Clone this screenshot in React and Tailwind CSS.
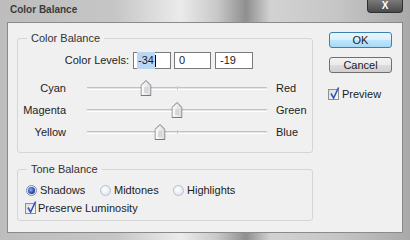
import React from 'react';

const sliders = [
  { left: 'Cyan', right: 'Red', value: -34 },
  { left: 'Magenta', right: 'Green', value: 0 },
  { left: 'Yellow', right: 'Blue', value: -19 },
];

const Check = () => (
  <span className="relative w-[11px] h-[11px] border border-[#8e8f8f] bg-[linear-gradient(135deg,#dcdcdc,#fbfbfb)] shrink-0">
    <svg className="absolute left-[0px] top-[-3px] overflow-visible" width="11" height="13" viewBox="0 0 11 13">
      <path d="M2 6.5 L4.6 11 L9.6 0.5" fill="none" stroke="#3355c0" strokeWidth="1.6" />
    </svg>
  </span>
);

const Radio = ({ checked }) => (
  <span className={`w-[11px] h-[11px] rounded-full border shrink-0 flex items-center justify-center ${checked ? 'border-[#7d8fa8] bg-[#dfe8f2]' : 'border-[#b3c0cf] bg-[radial-gradient(circle_at_40%_40%,#ffffff,#d5e0ec)]'}`}>
    {checked && <span className="w-[7px] h-[7px] rounded-full bg-[radial-gradient(circle_at_40%_40%,#8fb0ff,#2a3fa8_60%,#1b2a7a)]" />}
  </span>
);

const Thumb = () => (
  <svg width="11" height="16" viewBox="0 0 11 16">
    <defs>
      <linearGradient id="tg" x1="0" x2="1" y1="0" y2="0">
        <stop offset="0" stopColor="#ffffff" />
        <stop offset="1" stopColor="#d8d8d8" />
      </linearGradient>
    </defs>
    <path d="M0.5 5.5 L5.5 0.5 L10.5 5.5 V15.5 H0.5 Z" fill="url(#tg)" stroke="#6f7a86" />
    <path d="M4.5 7 V13 M6.5 7 V13" stroke="#c4c4c4" />
  </svg>
);

export default function App() {
  return (
    <div className="w-[410px] h-[240px] flex flex-col overflow-hidden font-['Liberation_Sans',Arial,sans-serif] text-[11px] text-[#1c1c1c] bg-[linear-gradient(90deg,#bdbdbd_0%,#c6c6c6_28%,#ebebeb_44%,#c8c8c8_53%,#8f8f8f_60%,#d2d2d2_66%,#c6c6c6_82%,#a9a9a9_100%)]">
      <div className="h-[22px] flex shrink-0">
        <div className="pl-[10px] pt-[5px] text-[10px] font-bold text-[#3b3b3b] leading-none">Color Balance</div>
        <div className="ml-auto mr-[7px] w-[36px] h-[13px] rounded-b-[4px] border border-t-0 border-[#2e2e2e] bg-[linear-gradient(180deg,#7a7a7a,#4a4a4a)] flex items-center justify-center">
          <span className="text-white font-bold text-[10px] leading-none">X</span>
        </div>
      </div>

      <div className="flex-1 mx-[7px] mb-[7px] border border-[#8a8a8a] bg-[#f0f0f0] flex">
        <div className="pl-[9px] pt-[9px] flex flex-col">
          <fieldset className="w-[296px] h-[121px] border border-[#d5d5d5] rounded-[3px]">
            <legend className="ml-[9px] px-[4px] leading-[13px] text-[#333]">Color Balance</legend>
            <div className="flex items-center mt-[7px] h-[17px]">
              <span className="w-[111px] text-right">Color Levels:</span>
              <div className="ml-[4px] w-[38px] h-[17px] border border-[#7a7a7a] bg-white flex items-center pl-[3px]">
                <span className="bg-[#b9d7f3] px-[1px]">-34</span>
                <span className="w-px h-[12px] bg-black" />
              </div>
              <div className="ml-[3px] w-[37px] h-[17px] border border-[#7a7a7a] bg-white flex items-center pl-[4px]">0</div>
              <div className="ml-[4px] w-[38px] h-[17px] border border-[#7a7a7a] bg-white flex items-center pl-[4px]">-19</div>
            </div>
            <div className="mt-[8px] flex flex-col">
              {sliders.map((s) => (
                <div key={s.left} className="h-[22px] flex items-center">
                  <span className="w-[48px] text-right">{s.left}</span>
                  <div className="relative ml-[21px] w-[180px] h-[22px] flex items-center">
                    <div className="w-full h-[3px] border-t border-[#c2c2c2] border-b border-b-white bg-[#e4e4e4]" />
                    <span className="absolute left-1/2 top-[9px] w-px h-[4px] bg-[#c8c8c8]" />
                    <span className="absolute top-[3px] -translate-x-1/2" style={{ left: `${50 + s.value / 2}%` }}>
                      <Thumb />
                    </span>
                  </div>
                  <span className="ml-[9px]">{s.right}</span>
                </div>
              ))}
            </div>
          </fieldset>

          <fieldset className="mt-[10px] w-[296px] h-[58px] border border-[#d5d5d5] rounded-[3px]">
            <legend className="ml-[9px] px-[4px] leading-[13px] text-[#333]">Tone Balance</legend>
            <div className="mt-[7px] pl-[8px] h-[14px] flex items-center">
              <div className="w-[74px] flex items-center gap-[3px]"><Radio checked /><span>Shadows</span></div>
              <div className="w-[73px] flex items-center gap-[3px]"><Radio /><span>Midtones</span></div>
              <div className="flex items-center gap-[3px]"><Radio /><span>Highlights</span></div>
            </div>
            <div className="mt-[4px] pl-[7px] h-[14px] flex items-center gap-[2px]">
              <Check />
              <span>Preserve Luminosity</span>
            </div>
          </fieldset>
        </div>

        <div className="ml-[16px] pt-[9px] flex flex-col">
          <button className="w-[63px] h-[16px] rounded-[3px] border border-[#3c7fb1] bg-[linear-gradient(180deg,#eaf6fd_0%,#d9f0fc_50%,#bee6fd_51%,#a7d9f5_100%)] text-[11px] leading-none">OK</button>
          <button className="mt-[9px] w-[63px] h-[16px] rounded-[3px] border border-[#707070] bg-[linear-gradient(180deg,#f2f2f2_0%,#ebebeb_50%,#dddddd_51%,#cfcfcf_100%)] text-[11px] leading-none">Cancel</button>
          <div className="mt-[15px] -ml-[1px] h-[13px] flex items-center gap-[3px]">
            <Check />
            <span>Preview</span>
          </div>
        </div>
      </div>
    </div>
  );
}
